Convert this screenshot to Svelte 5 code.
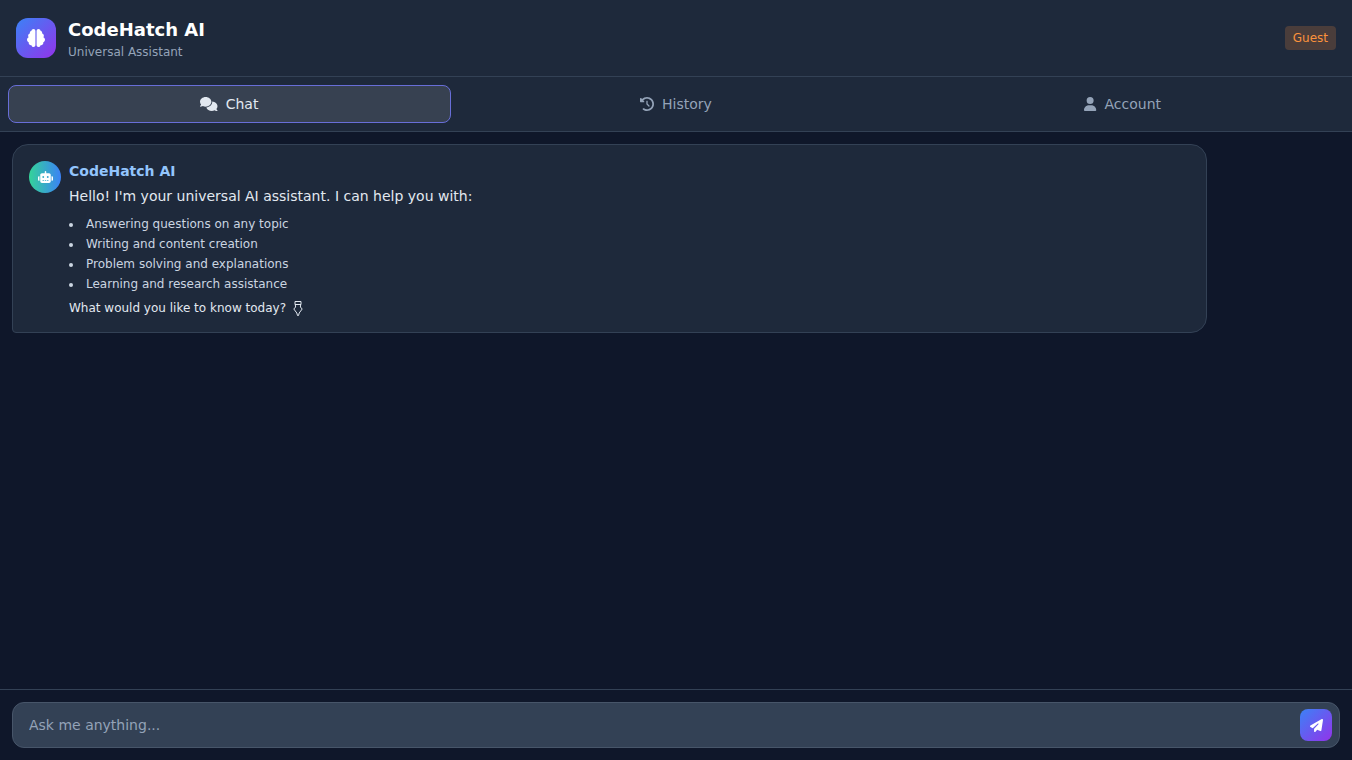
<script>
  const tabs = [
    { label: "Chat", view: "0 0 640 512", w: 17.5, d: "M208 352c114.9 0 208-78.8 208-176S322.9 0 208 0S0 78.8 0 176c0 38.6 14.7 74.3 39.6 103.4c-3.5 9.4-8.7 17.7-14.2 24.7c-4.8 6.2-9.7 11-13.3 14.3c-1.8 1.6-3.3 2.9-4.3 3.7c-.5 .4-.9 .7-1.1 .8l-.2 .2 0 0 0 0C1 327.2-1.4 334.4 .8 340.9S9.1 352 16 352c21.8 0 43.8-5.6 62.1-12.5c9.2-3.5 17.8-7.4 25.3-11.4C134.1 343.3 169.8 352 208 352zM448 176c0 112.3-99.1 196.9-216.5 207C255.8 457.4 336.4 512 432 512c38.2 0 73.9-8.7 104.7-23.9c7.5 4 16 7.9 25.2 11.4c18.3 6.9 40.3 12.5 62.1 12.5c6.9 0 13.1-4.5 15.2-11.1c2.1-6.6-.2-13.8-5.8-17.9l0 0 0 0-.2-.2c-.2-.2-.6-.4-1.1-.8c-1-.8-2.5-2-4.3-3.7c-3.6-3.3-8.5-8.1-13.3-14.3c-5.5-7-10.7-15.4-14.2-24.7c24.9-29 39.6-64.7 39.6-103.4c0-92.8-84.9-168.9-192.6-175.5c.4 5.1 .6 10.3 .6 15.5z" },
    { label: "History", view: "0 0 512 512", w: 14, d: "M75 75L41 41C25.9 25.9 0 36.6 0 57.9V168c0 13.3 10.7 24 24 24H134.1c21.4 0 32.1-25.9 17-41l-30.8-30.8C155 85.5 203 64 256 64c106 0 192 86 192 192s-86 192-192 192c-40.8 0-78.6-12.7-109.7-34.4c-14.5-10.1-34.4-6.6-44.6 7.9s-6.6 34.4 7.9 44.6C151.2 495 201.7 512 256 512c141.4 0 256-114.6 256-256S397.4 0 256 0C185.3 0 121.3 28.7 75 75zm181 53c-13.3 0-24 10.7-24 24V256c0 6.4 2.5 12.5 7 17l72 72c9.4 9.4 24.6 9.4 33.9 0s9.4-24.6 0-33.9l-65-65V152c0-13.3-10.7-24-24-24z" },
    { label: "Account", view: "0 0 448 512", w: 12.25, d: "M224 256A128 128 0 1 0 224 0a128 128 0 1 0 0 256zm-45.7 48C79.8 304 0 383.8 0 482.3C0 498.7 13.3 512 29.7 512H418.3c16.4 0 29.7-13.3 29.7-29.7C448 383.8 368.2 304 269.7 304H178.3z" }
  ];

  const topics = [
    "Answering questions on any topic",
    "Writing and content creation",
    "Problem solving and explanations",
    "Learning and research assistance"
  ];

  let active = $state("Chat");
  let question = $state("");
</script>

<div class="page">
  <header class="top">
    <div class="brand">
      <div class="logo">
        <svg viewBox="0 0 512 512" width="18" height="18" fill="currentColor"><path d="M184 0c30.9 0 56 25.1 56 56V456c0 30.9-25.1 56-56 56c-28.9 0-52.7-21.9-55.7-50.1c-5.2 1.4-10.7 2.1-16.3 2.1c-35.3 0-64-28.7-64-64c0-7.4 1.3-14.6 3.6-21.2C21.4 367.4 0 338.2 0 304c0-31.9 18.7-59.5 45.8-72.3C37.1 220.8 32 207 32 192c0-30.7 21.6-56.3 50.4-62.6C80.8 123.9 80 118 80 112c0-29.9 20.6-55.1 48.3-62.1C131.3 21.9 155.1 0 184 0zM328 0c28.9 0 52.6 21.9 55.7 49.9c27.8 7 48.3 32.1 48.3 62.1c0 6-.8 11.9-2.4 17.4c28.8 6.2 50.4 31.9 50.4 62.6c0 15-5.1 28.8-13.8 39.7C493.3 244.5 512 272.1 512 304c0 34.2-21.4 63.4-51.6 74.8c2.3 6.6 3.6 13.8 3.6 21.2c0 35.3-28.7 64-64 64c-5.6 0-11.1-.7-16.3-2.1c-3 28.2-26.8 50.1-55.7 50.1c-30.9 0-56-25.1-56-56V56c0-30.9 25.1-56 56-56z" /></svg>
      </div>
      <div>
        <h1>CodeHatch AI</h1>
        <p class="sub">Universal Assistant</p>
      </div>
    </div>
    <span class="badge">Guest</span>
  </header>

  <nav class="tabs">
    {#each tabs as tab}
      <button class="tab" class:on={active == tab.label} onclick={() => (active = tab.label)}>
        <svg viewBox={tab.view} width={tab.w} height="14" fill="currentColor"><path d={tab.d} /></svg>
        {tab.label}
      </button>
    {/each}
  </nav>

  <main class="messages">
    <div class="bubble">
      <div class="avatar">
        <svg viewBox="0 0 640 512" width="15" height="12" fill="currentColor"><path d="M320 0c17.7 0 32 14.3 32 32V96H472c39.8 0 72 32.2 72 72V440c0 39.8-32.2 72-72 72H168c-39.8 0-72-32.2-72-72V168c0-39.8 32.2-72 72-72H288V32c0-17.7 14.3-32 32-32zM208 384c-8.8 0-16 7.2-16 16s7.2 16 16 16h32c8.8 0 16-7.2 16-16s-7.2-16-16-16H208zm96 0c-8.8 0-16 7.2-16 16s7.2 16 16 16h32c8.8 0 16-7.2 16-16s-7.2-16-16-16H304zm96 0c-8.8 0-16 7.2-16 16s7.2 16 16 16h32c8.8 0 16-7.2 16-16s-7.2-16-16-16H400zM264 256a40 40 0 1 0 -80 0 40 40 0 1 0 80 0zm152 40a40 40 0 1 0 0-80 40 40 0 1 0 0 80zM48 224H64V416H48c-26.5 0-48-21.5-48-48V272c0-26.5 21.5-48 48-48zm544 0c26.5 0 48 21.5 48 48v96c0 26.5-21.5 48-48 48H576V224h16z" /></svg>
      </div>
      <div class="body">
        <div class="name">CodeHatch AI</div>
        <p class="hello">Hello! I'm your universal AI assistant. I can help you with:</p>
        <ul>
          {#each topics as topic}
            <li>{topic}</li>
          {/each}
        </ul>
        <p class="ask">What would you like to know today?
          <svg class="point" viewBox="0 0 10 15" width="10" height="15" fill="none" stroke="currentColor" stroke-width="1"><path d="M2 .5h6v3H2zM2.3 3.5 2.6 6 .8 8l3 4 .7 2.5h1L6.2 12l3-4-1.800-2 .3-2.500" /></svg>
        </p>
      </div>
    </div>
  </main>

  <footer class="composer">
    <div class="field">
      <input placeholder="Ask me anything..." bind:value={question} />
      <button class="send" aria-label="Send">
        <svg viewBox="0 0 512 512" width="13" height="13" fill="currentColor"><path d="M498.1 5.6c10.1 7 15.4 19.1 13.5 31.2l-64 416c-1.5 9.7-7.4 18.2-16 23s-18.9 5.4-28 1.6L284 427.7l-68.5 74.1c-8.9 9.7-22.9 12.9-35.2 8.1S160 493.2 160 480V396.4c0-4 1.5-7.8 4.2-10.7L331.8 202.8c5.8-6.3 5.6-16-.4-22s-15.7-6.4-22-.7L106 360.8 17.7 316.6C7.1 311.3 .3 300.7 0 288.9s5.9-22.8 16.1-28.7l448-256c10.7-6.1 23.9-5.5 34 1.4z" /></svg>
      </button>
    </div>
  </footer>
</div>

<style>
:global(body) {
    background-color: #0f172a;
    color: #e2e8f0;
    font-family: "DejaVu Sans", sans-serif;
}

.page {
    display: flex;
    flex-direction: column;
    height: 100vh;
    overflow: hidden;
}

.top {
    display: flex;
    align-items: center;
    justify-content: space-between;
    padding: 16px;
    background-color: #1e293b;
    border-bottom: 1px solid #334155;
}

.brand {
    display: flex;
    align-items: center;
    gap: 12px;
}

.logo {
    display: flex;
    align-items: center;
    justify-content: center;
    width: 40px;
    height: 40px;
    border-radius: 12px;
    color: #fff;
    background: linear-gradient(135deg, #3b82f6, #9333ea);
}

h1 {
    margin: 0;
    font-size: 18px;
    line-height: 28px;
    font-weight: 700;
    color: #fff;
}

.sub {
    margin: 0;
    font-size: 12px;
    line-height: 16px;
    color: #94a3b8;
}

.badge {
    padding: 4px 8px;
    font-size: 12px;
    line-height: 16px;
    color: #fb923c;
    background-color: rgba(251, 146, 60, 0.2);
    border-radius: 4px;
}

.tabs {
    display: flex;
    gap: 4px;
    padding: 8px;
    background-color: #1e293b;
    border-bottom: 1px solid #334155;
}

.tab {
    flex: 1;
    display: flex;
    align-items: center;
    justify-content: center;
    gap: 8px;
    padding: 8px;
    font-family: inherit;
    font-size: 14px;
    line-height: 20px;
    color: #94a3b8;
    background: transparent;
    border: 1px solid transparent;
    border-radius: 8px;
}

.tab.on {
    color: #e2e8f0;
    background-color: #374151;
    border-color: #686ed8;
}

.messages {
    flex: 1;
    padding: 12px;
    overflow-y: auto;
}

.bubble {
    display: flex;
    gap: 8px;
    width: 90%;
    box-sizing: border-box;
    padding: 16px;
    background-color: #1e293b;
    border: 1px solid #334155;
    border-radius: 16px 16px 16px 4px;
}

.avatar {
    display: flex;
    flex-shrink: 0;
    align-items: center;
    justify-content: center;
    width: 32px;
    height: 32px;
    border-radius: 50%;
    color: #fff;
    background: linear-gradient(90deg, #34d399, #3b82f6);
}

.name {
    margin-bottom: 5px;
    font-size: 14px;
    line-height: 20px;
    font-weight: 700;
    color: #93c5fd;
}

.hello {
    margin: 0;
    font-size: 14px;
    line-height: 20px;
    color: #e2e8f0;
}

ul {
    margin: 10px 0 0;
    padding-left: 14px;
    font-size: 12px;
    line-height: 16px;
    color: #cbd5e1;
}

li {
    padding-left: 3px;
}

li + li {
    margin-top: 4px;
}

.ask {
    height: 16px;
    margin: 8px 0 0;
    font-size: 12px;
    line-height: 16px;
    color: #e2e8f0;
}

.point {
    margin-left: 3px;
    vertical-align: -4px;
}

.composer {
    padding: 12px;
    border-top: 1px solid #334155;
}

.field {
    display: flex;
    align-items: center;
    gap: 8px;
    padding: 6px 7px 6px 16px;
    background-color: #334155;
    border: 1px solid #475569;
    border-radius: 12px;
}

input {
    flex: 1;
    padding: 0;
    font-family: inherit;
    font-size: 14px;
    color: #e2e8f0;
    background: transparent;
    border: none;
    outline: none;
}

input::placeholder {
    color: #94a3b8;
}

.send {
    display: flex;
    align-items: center;
    justify-content: center;
    width: 32px;
    height: 32px;
    padding: 0;
    color: #fff;
    background: linear-gradient(135deg, #3b82f6, #9333ea);
    border: none;
    border-radius: 8px;
}
</style>
